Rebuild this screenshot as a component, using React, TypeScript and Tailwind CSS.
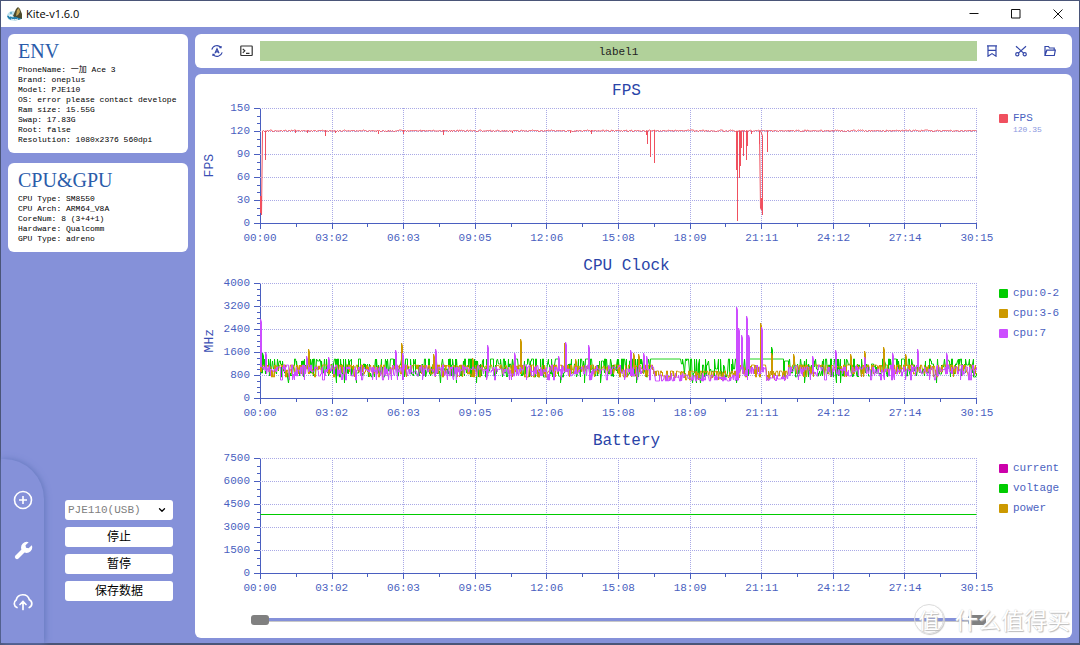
import type { ReactNode } from "react";
import { ChevronDown } from "lucide-react";

type Series = { name: string; color: string; points: string; value?: string };

type ChartProps = {
  title: string;
  unit?: string;
  ticks: number[];
  minor: number;
  series: Series[];
};

const PLOT_W = 717;
const PLOT_H = 115;

const times = [
  "00:00",
  "03:02",
  "06:03",
  "09:05",
  "12:06",
  "15:08",
  "18:09",
  "21:11",
  "24:12",
  "27:14",
  "30:15",
];

const createRandom = (seed: number) => () => {
  seed = (seed * 1664525 + 1013904223) % 4294967296;
  return seed / 4294967296;
};

// x position -> lowest point of the drop
const fpsDrops: Record<number, number> = {
  5: 52, 35: 25, 47: 25, 65: 28, 75: 25, 118: 26, 143: 26, 183: 27, 252: 25,
  310: 25, 331: 26, 386: 27, 387: 36, 390: 49, 394: 55,
  476: 62, 477: 113, 479: 70, 480: 58, 481: 40, 483: 48,
  486: 52, 487: 38, 491: 26, 499: 36, 507: 44,
};

const fpsPoints = () => {
  const random = createRandom(7);
  const points = ["0,88", "0,105", "1,88", "1,107", "2,23"];
  for (let x = 3; x < PLOT_W; x++) {
    points.push(`${x},${22 + Math.round(random() * 3) / 2}`);
    if (fpsDrops[x]) {
      points.push(`${x},${fpsDrops[x]}`, `${x},23`);
    }
    if (x === 499) {
      points.push("500,100", "501,102", "501,90", "502,107", "502,28");
    }
  }
  return points.join(" ");
};

const clockPoints = (
  seed: number,
  levels: number[],
  peaks: Record<number, number>,
  level?: (x: number, y: number) => number
) => {
  const random = createRandom(seed);
  const points: string[] = [];
  let y = levels[0];
  for (let x = 0; x < PLOT_W; x++) {
    for (let sample = 0; sample < 2; sample++) {
      if (random() > 0.35) {
        y = levels[Math.floor(random() * levels.length)];
      }
      points.push(`${x},${level ? level(x, y) : y}`);
    }
    if (peaks[x]) {
      points.push(`${x},${peaks[x]}`, `${x + 1},${peaks[x] + 3}`, `${x + 1},${y}`);
    }
  }
  return points.join(" ");
};

const isIdle = (x: number) => (x > 393 && x < 480) || (x > 505 && x < 528);

const littleCores = clockPoints(
  11,
  [76, 76, 78, 81, 84, 88, 91, 94, 76, 82, 86, 100, 93, 90],
  { 2: 70, 511: 64 },
  (x, y) => {
    if ((x > 390 && x < 421) || (x > 488 && x < 522)) {
      return 76;
    }
    return y === 100 && x % 4 ? 90 : y;
  }
);

const middleCores = clockPoints(
  23,
  [82, 82, 83, 84, 82, 87, 89, 82, 91, 86, 94],
  {
    0: 60, 48: 66, 141: 60, 173: 71, 175: 71, 212: 75, 260: 56, 304: 60, 315: 76,
    373: 70, 378: 71, 500: 40, 511: 70, 533: 71, 590: 71, 604: 68, 623: 64, 645: 71,
  },
  (x, y) => (isIdle(x) ? Math.min(y + 6, 97) : y)
);

const primeCore = clockPoints(
  37,
  [82, 84, 86, 87, 89, 91, 84, 93, 88, 86, 97],
  {
    0: 36, 5: 69, 46: 73, 68: 74, 135: 67, 142: 70, 175: 66, 227: 62, 254: 70,
    298: 73, 305: 59, 328: 62, 370: 67, 383: 70, 386: 73, 476: 24, 478: 45,
    481: 52, 486: 33, 488: 52, 501: 44, 552: 73, 575: 67, 604: 74, 632: 70,
    657: 66, 686: 70,
  },
  (x, y) => (isIdle(x) ? Math.min(y + 8, 98) : y)
);

const charts: ChartProps[] = [
  {
    title: "FPS",
    unit: "FPS",
    ticks: [150, 120, 90, 60, 30, 0],
    minor: 3,
    series: [{ name: "FPS", color: "#f0505f", points: fpsPoints(), value: "120.35" }],
  },
  {
    title: "CPU Clock",
    unit: "MHz",
    ticks: [4000, 3200, 2400, 1600, 800, 0],
    minor: 4,
    series: [
      { name: "cpu:0-2", color: "#00cc00", points: littleCores },
      { name: "cpu:3-6", color: "#cc9900", points: middleCores },
      { name: "cpu:7", color: "#cc4dff", points: primeCore },
    ],
  },
  {
    title: "Battery",
    ticks: [7500, 6000, 4500, 3000, 1500, 0],
    minor: 3,
    series: [
      { name: "current", color: "#cc00aa", points: "475,115.5 486,115.5" },
      { name: "voltage", color: "#00cc00", points: "0,56.5 716,56.5" },
      { name: "power", color: "#cc9900", points: "" },
    ],
  },
];

const env = [
  "PhoneName: 一加 Ace 3",
  "Brand: oneplus",
  "Model: PJE110",
  "OS: error please contact develope",
  "Ram size: 15.55G",
  "Swap: 17.83G",
  "Root: false",
  "Resolution: 1080x2376 560dpi",
];

const hardware = [
  "CPU Type: SM8550",
  "CPU Arch: ARM64_V8A",
  "CoreNum: 8 (3+4+1)",
  "Hardware: Qualcomm",
  "GPU Type: adreno",
];

const InfoCard = ({ title, lines }: { title: string; lines: string[] }) => (
  <section className="overflow-hidden rounded-md bg-white pt-1 pb-2 pl-[10px]">
    <h2 className="font-['Liberation_Serif',serif] text-[20px] leading-[27px] text-[#2a5caa]">
      {title}
    </h2>
    <ul className="text-[8px] leading-[10px] whitespace-nowrap text-black">
      {lines.map((line) => (
        <li key={line} className="h-[10px]">
          {line}
        </li>
      ))}
    </ul>
  </section>
);

const IconButton = ({ label, children }: { label: string; children: ReactNode }) => (
  <button type="button" aria-label={label} className="flex items-center justify-center">
    {children}
  </button>
);

const Kite = () => (
  <svg viewBox="0 0 16 16" className="size-4">
    <path d="M0 9c1-2 3-4 5-4 3 0 5 2 9 5v3c-5 2-10 2-13 0z" fill="#bfe3ee" />
    <path d="M6 10 9 3l2-2 2 2 2 5v5l-6 0z" fill="#4c4a2c" />
    <path d="m10 4 2-2 1 4-2 3-2 1z" fill="#c2a558" />
    <path d="M0 10c2-1 4 2 7 1s4 2 8 1c-2 3-12 3-14 0z" fill="#2380ad" />
    <path d="M2 10.500c1.500-1.500 3-1.500 4 0M4 13c2 1 5 1 7 0" fill="none" stroke="#fff" />
    <circle cx="4" cy="7" r="1" fill="#59a9c6" />
  </svg>
);

const TitleBar = () => (
  <header className="flex h-[26px] items-center bg-white pl-[6px] text-black">
    <Kite />
    <h1 className="flex-1 pl-[3px] font-['Open_Sans',sans-serif] text-[11px]">Kite-v1.6.0</h1>
    <div className="flex">
      <button type="button" aria-label="Minimize" className="flex w-[42px] justify-center">
        <svg viewBox="0 0 10 10" className="size-[10px]" stroke="#111">
          <path d="M.5 4.500h9" />
        </svg>
      </button>
      <button type="button" aria-label="Maximize" className="flex w-[42px] justify-center">
        <svg viewBox="0 0 10 10" className="size-[10px]" fill="none" stroke="#111">
          <path d="M.5.5h8.500v8.500H.5z" />
        </svg>
      </button>
      <button type="button" aria-label="Close" className="flex w-[42px] justify-center">
        <svg viewBox="0 0 10 10" className="size-[10px]" stroke="#111">
          <path d="m.5.5 9 9m0-9-9 9" />
        </svg>
      </button>
    </div>
  </header>
);

const Drawer = () => (
  <nav className="flex h-[184px] w-[43px] flex-col items-center gap-[31px] rounded-tr-[40px] pt-[31px] text-white shadow-[1px_0_6px_#6478bd]">
    <IconButton label="Add">
      <svg viewBox="0 0 20 20" className="size-5" fill="none" stroke="currentColor" strokeWidth="1.600">
        <circle cx="10" cy="10" r="8.500" />
        <path d="M10 6v8M6 10h8" />
      </svg>
    </IconButton>
    <IconButton label="Tools">
      <svg viewBox="0 0 20 20" className="size-5">
        <path d="m4 16 7-7" stroke="currentColor" strokeWidth="4.200" strokeLinecap="round" />
        <path
          d="M18.800 4.200 15.600 7.300 13 6.800l-.5-2.500 3.200-3.100a5.700 5.700 0 0 0-7.300 7.200l3.200 3.200a5.700 5.700 0 0 0 7.200-7.400z"
          fill="currentColor"
        />
      </svg>
    </IconButton>
    <IconButton label="Upload">
      <svg
        viewBox="0 0 20 20"
        className="size-5"
        fill="none"
        stroke="currentColor"
        strokeWidth="1.700"
        strokeLinecap="round"
      >
        <path d="M4 15.500A4.200 4.200 0 0 1 3.200 8a6.800 6.800 0 0 1 13.200-.2 4.200 4.200 0 0 1-.2 7.700" />
        <path d="M10 17.500V9.500m-3 3 3-3 3 3" />
      </svg>
    </IconButton>
  </nav>
);

const Sidebar = () => (
  <aside className="flex w-[194px] shrink-0 flex-col justify-between pt-[7px]">
    <div className="flex flex-col gap-[10px] pr-[7px] pl-[7px]">
      <InfoCard title="ENV" lines={env} />
      <InfoCard title="CPU&GPU" lines={hardware} />
    </div>
    <div className="flex items-end">
      <Drawer />
      <div className="mb-[42px] ml-[21px] flex w-[108px] flex-col gap-[7px] text-[12px] leading-[22px] text-black">
        <div className="relative">
          <select
            aria-label="Device"
            className="block h-5 w-full appearance-none rounded-[3px] bg-white pl-[3px] text-[11px] leading-5 text-[#808080]"
          >
            <option>PJE110(USB)</option>
          </select>
          <ChevronDown
            className="pointer-events-none absolute top-[5px] right-[6px] size-[10px] text-black"
            strokeWidth={3}
          />
        </div>
        <button type="button" className="h-5 rounded-[3px] bg-white">
          停止
        </button>
        <button type="button" className="h-5 rounded-[3px] bg-white">
          暂停
        </button>
        <button type="button" className="h-5 rounded-[3px] bg-white">
          保存数据
        </button>
      </div>
    </div>
  </aside>
);

const Toolbar = () => (
  <div className="flex h-[34px] items-center rounded-md bg-white text-[#3346a8]">
    <div className="flex w-[65px] items-center gap-[17px] pl-4">
      <IconButton label="Auto">
        <svg viewBox="0 0 12 12" className="size-3" fill="none" stroke="currentColor" strokeWidth="1.100">
          <path d="M.8 4.600A5.300 5.300 0 0 1 9.800 2.300M8.300 2.600h1.800V1M11.200 7.400A5.300 5.300 0 0 1 2.200 9.700M3.700 9.400H1.900V11" />
          <path d="m4 8.300 2-4.600 2 4.600M4.700 6.900h2.600" strokeWidth="1.200" />
        </svg>
      </IconButton>
      <IconButton label="Console">
        <svg viewBox="0 0 13 12" className="h-3 w-[13px]" fill="none" stroke="#333" strokeWidth="1.200">
          <rect x=".8" y="1" width="11.400" height="9.500" rx=".5" />
          <path d="m2.800 3.800 2 2-2 2M6 8.300h3.500" />
        </svg>
      </IconButton>
    </div>
    <div className="h-5 flex-1 bg-[#b1d19a] text-center text-[11px] leading-[22px] text-[#222]">
      label1
    </div>
    <div className="flex w-[95px] items-center gap-[17px] pl-[9px]">
      <IconButton label="Bookmark">
        <svg viewBox="0 0 12 12" className="size-3" fill="none" stroke="currentColor" strokeWidth="1.200">
          <path d="M2 .8h8v10.400L6 8.600l-4 2.600zM2 5.300h8M1 .8h10" />
        </svg>
      </IconButton>
      <IconButton label="Cut">
        <svg viewBox="0 0 12 12" className="size-3" fill="none" stroke="currentColor" strokeWidth="1.200">
          <circle cx="2.300" cy="9.200" r="1.600" />
          <circle cx="9.700" cy="9.200" r="1.600" />
          <path d="m1 1.300 7.600 6.800M11 1.300 3.400 8.100" />
        </svg>
      </IconButton>
      <IconButton label="Open folder">
        <svg viewBox="0 0 12 12" className="size-3" fill="none" stroke="currentColor" strokeWidth="1.200">
          <path d="M1 10.500V1.500h3.500l1 1.500h4.700v2M1 10.500l1.800-5.300h8.500L10.300 10.500z" />
        </svg>
      </IconButton>
    </div>
  </div>
);

const Plot = ({ series }: { series: Series[] }) => (
  <svg
    viewBox={`0 0 ${PLOT_W} ${PLOT_H}`}
    preserveAspectRatio="none"
    className="h-[115px] w-full overflow-visible"
    fill="none"
  >
    <g stroke="#a9a9e6" strokeDasharray="1 1" shapeRendering="crispEdges">
      {[0, 1, 2, 3, 4].map((row) => (
        <path key={row} d={`M0 ${row * 23 + 0.5}H${PLOT_W}`} />
      ))}
      {times.slice(1).map((time, i) => (
        <path key={time} d={`M${Math.round((i + 1) * 71.6) + 0.5} 0V${PLOT_H}`} />
      ))}
    </g>
    {series.map(({ name, color, points }) => (
      <polyline
        key={name}
        points={points}
        transform="translate(.5 0)"
        stroke={color}
        strokeWidth="1"
        strokeLinejoin="bevel"
      />
    ))}
  </svg>
);

const YTicks = ({ minor }: { minor: number }) => (
  <svg viewBox="0 0 8 115" className="h-[115px] w-2 overflow-visible" stroke="#4a5fc0" shapeRendering="crispEdges">
    <path d="M8.500 0v116" />
    {Array.from({ length: 5 * minor + 1 }, (_, i) => (
      <path key={i} d={`M${i % minor ? 5 : 2} ${Math.round((i * 23) / minor) + 0.5}H8`} />
    ))}
  </svg>
);

const XTicks = () => (
  <svg
    viewBox={`0 0 ${PLOT_W} 6`}
    preserveAspectRatio="none"
    className="h-[6px] w-full overflow-visible"
    stroke="#4a5fc0"
    shapeRendering="crispEdges"
  >
    <path d={`M0 .5H${PLOT_W}`} />
    {Array.from({ length: 21 }, (_, i) => (
      <path key={i} d={`M${Math.round(i * 35.8) + 0.5} 0V${i % 2 ? 4 : 6}`} />
    ))}
  </svg>
);

const Chart = ({ title, unit, ticks, minor, series }: ChartProps) => (
  <section className="text-[11px] text-[#4a5fc0]">
    <h2 className="h-[34px] pr-[14px] text-center text-[16px] leading-[34px] text-[#2a44a8]">
      {title}
    </h2>
    <div className="grid grid-cols-[65px_1fr_95px]">
      <div className="flex h-[115px] justify-end">
        <div className="flex flex-1 items-center pl-[6px]">
          <span className="rotate-180 text-[13px] leading-[18px] text-[#3a4fb4] [writing-mode:vertical-rl]">
            {unit}
          </span>
        </div>
        <ul className="flex flex-col items-end justify-between pr-[2px]">
          {ticks.map((tick) => (
            <li key={tick} className="flex h-0 items-center">
              {tick}
            </li>
          ))}
        </ul>
        <YTicks minor={minor} />
      </div>
      <Plot series={series} />
      <ul className="flex flex-col pl-[22px] leading-5">
        {series.map(({ name, color, value }) => (
          <li key={name}>
            <div className="flex h-5 items-center gap-[5px]">
              <span className="size-[9px] rounded-[1px]" style={{ backgroundColor: color }} />
              {name}
            </div>
            {value && (
              <div className="-mt-1 pl-[14px] text-[8px] leading-[12px] text-[#8b97e0]">{value}</div>
            )}
          </li>
        ))}
      </ul>
      <div className="col-start-2 h-[26px]">
        <XTicks />
        <ul className="flex justify-between leading-[18px]">
          {times.map((time) => (
            <li key={time} className="flex w-0 justify-center">
              {time}
            </li>
          ))}
        </ul>
      </div>
    </div>
  </section>
);

const thumb =
  "pointer-events-none col-start-1 row-start-1 h-[10px] w-full appearance-none bg-transparent [&::-webkit-slider-thumb]:pointer-events-auto [&::-webkit-slider-thumb]:h-[10px] [&::-webkit-slider-thumb]:w-[18px] [&::-webkit-slider-thumb]:appearance-none [&::-webkit-slider-thumb]:rounded-[3px] [&::-webkit-slider-thumb]:bg-[#808080]";

const RangeSlider = () => (
  <div className="mt-4 mr-[86px] ml-[56px] grid items-center">
    <div className="col-start-1 row-start-1 mx-[9px] h-[4px] border-b border-[#c8c8c8] bg-[#8591d9]" />
    <input type="range" aria-label="Start time" defaultValue={0} className={thumb} />
    <input type="range" aria-label="End time" defaultValue={100} className={thumb} />
  </div>
);

const Watermark = () => (
  <div className="pointer-events-none absolute right-[2px] bottom-[2px] flex items-center gap-[11px] font-['Noto_Sans_CJK_SC',sans-serif] text-[23px] leading-[34px] text-white [text-shadow:1px_1px_1px_#bbb,0_0_1px_#ccc]">
    <span className="flex size-[30px] items-center justify-center rounded-full border border-[#dcdcdc] text-[21px] shadow-[1px_1px_1px_#ccc]">
      值
    </span>
    <span>什么值得买</span>
  </div>
);

export default function App() {
  return (
    <div className="flex min-h-screen flex-col border-x border-t border-b-2 border-[#4a5578] bg-[#8591d9] font-['Liberation_Mono','Noto_Sans_CJK_SC',monospace]">
      <TitleBar />
      <div className="flex flex-1">
        <Sidebar />
        <main className="flex min-w-0 flex-1 flex-col gap-[6px] pt-[7px] pr-[7px] pb-[5px]">
          <Toolbar />
          <div className="relative flex-1 rounded-md bg-white">
            {charts.map((chart) => (
              <Chart key={chart.title} {...chart} />
            ))}
            <RangeSlider />
            <Watermark />
          </div>
        </main>
      </div>
    </div>
  );
}
